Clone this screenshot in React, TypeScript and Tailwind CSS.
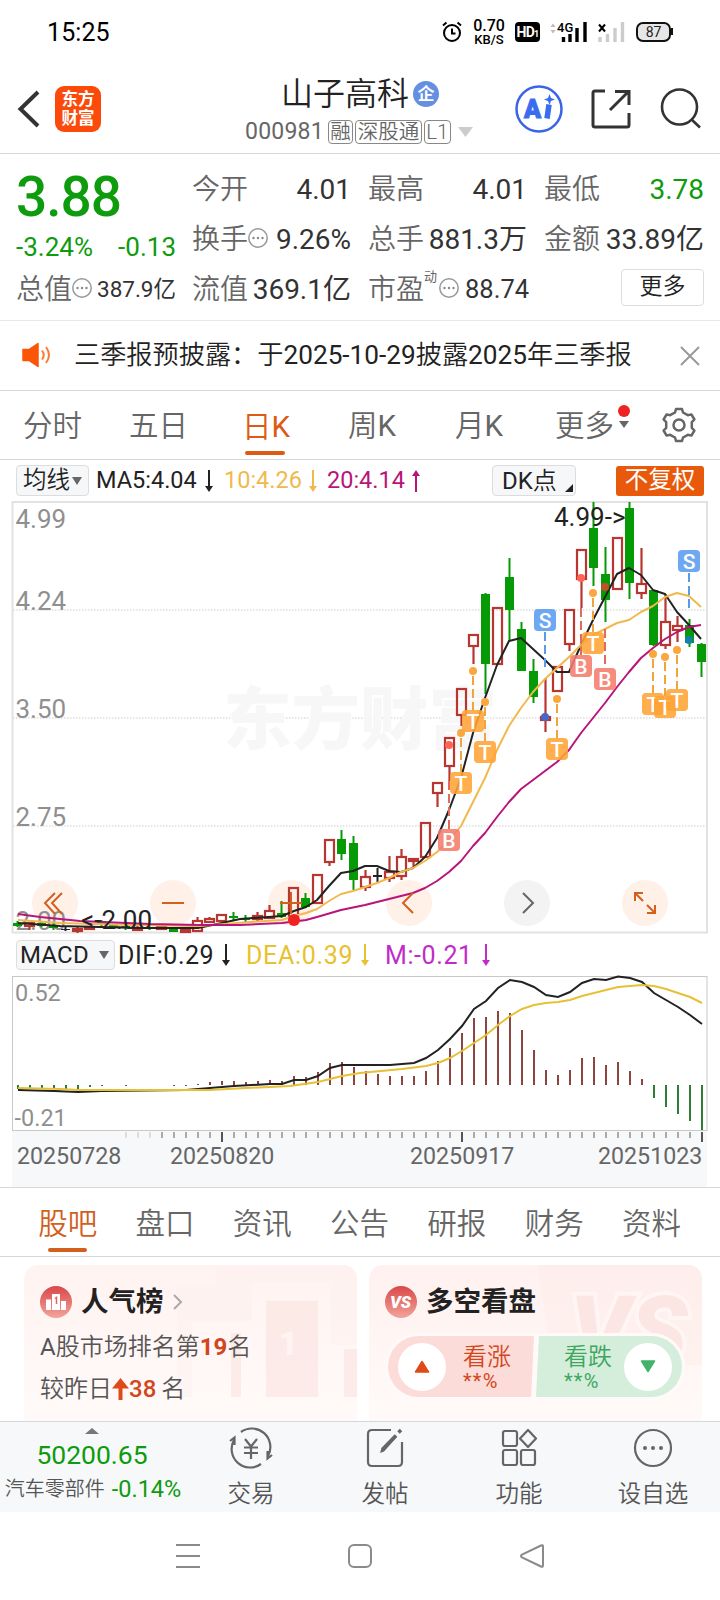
import type { ReactNode } from "react";

type Candle = [kind: "r" | "g" | "k", high: number, top: number, bottom: number, low: number];
type Point = [x: number, y: number];

const candles: Candle[] = [
    ["g", 921, 923, 926, 927],
    ["r", 923, 923, 926, 930],
    ["g", 921, 923, 926, 927],
    ["g", 923, 926, 928, 930],
    ["k", 926, 929, 930, 931],
    ["r", 927, 929, 931, 933],
    ["r", 926, 927, 929, 930],
    ["g", 920, 921, 924, 926],
    ["g", 924, 925, 927, 928],
    ["g", 925, 926, 928, 930],
    ["r", 926, 928, 930, 930],
    ["g", 926, 927, 929, 930],
    ["r", 926, 927, 929, 930],
    ["g", 928, 929, 932, 932],
    ["r", 929, 930, 932, 933],
    ["r", 917, 921, 931, 932],
    ["r", 917, 919, 922, 923],
    ["r", 914, 915, 921, 921],
    ["g", 912, 916, 918, 921],
    ["g", 915, 918, 920, 922],
    ["r", 912, 916, 919, 921],
    ["r", 905, 911, 918, 918],
    ["g", 901, 913, 917, 918],
    ["r", 887, 888, 917, 917],
    ["g", 893, 898, 907, 908],
    ["r", 874, 875, 903, 903],
    ["r", 839, 840, 862, 866],
    ["g", 830, 839, 854, 860],
    ["g", 836, 843, 880, 890],
    ["r", 870, 877, 887, 891],
    ["k", 868, 875, 877, 882],
    ["r", 856, 872, 878, 882],
    ["r", 849, 857, 876, 880],
    ["r", 858, 859, 861, 868],
    ["r", 822, 823, 857, 857],
    ["r", 782, 783, 793, 807],
    ["r", 737, 738, 766, 781],
    ["r", 688, 689, 715, 726],
    ["r", 634, 635, 646, 664],
    ["g", 593, 594, 664, 694],
    ["r", 607, 608, 664, 664],
    ["g", 558, 577, 610, 641],
    ["g", 622, 629, 671, 671],
    ["g", 659, 671, 697, 703],
    ["r", 678, 717, 720, 732],
    ["r", 666, 667, 691, 691],
    ["r", 609, 610, 644, 651],
    ["r", 549, 550, 579, 608],
    ["g", 502, 528, 568, 586],
    ["g", 547, 574, 600, 622],
    ["r", 537, 538, 589, 589],
    ["g", 502, 508, 583, 599],
    ["r", 548, 584, 593, 599],
    ["g", 590, 590, 645, 646],
    ["r", 594, 622, 645, 649],
    ["r", 616, 626, 630, 642],
    ["g", 619, 625, 643, 647],
    ["g", 643, 644, 662, 677],
];

const ma5: Point[] = [[18, 923], [60, 926], [100, 927], [140, 928], [198, 928], [222, 923], [240, 919], [282, 916], [294, 911], [306, 907], [317, 900], [329, 886], [341, 873], [353, 871], [365, 866], [377, 866], [389, 871], [401, 872], [413, 868], [425, 857], [437, 838], [449, 810], [461, 778], [473, 733], [485, 698], [497, 665], [509, 641], [521, 638], [533, 649], [545, 660], [557, 672], [569, 672], [581, 645], [593, 620], [605, 597], [617, 574], [629, 568], [641, 575], [653, 590], [665, 594], [677, 612], [689, 625], [701, 639]];
const ma10: Point[] = [[18, 920], [60, 923], [130, 925], [200, 926], [250, 922], [282, 920], [294, 916], [306, 913], [317, 909], [329, 901], [341, 894], [353, 891], [365, 887], [377, 883], [389, 878], [401, 872], [413, 868], [425, 861], [437, 852], [449, 841], [461, 826], [473, 802], [485, 778], [497, 750], [509, 726], [521, 708], [533, 692], [545, 679], [557, 668], [569, 657], [581, 645], [593, 635], [605, 629], [617, 623], [629, 620], [641, 612], [653, 606], [665, 597], [677, 593], [689, 596], [701, 607]];
const ma20: Point[] = [[18, 914], [40, 917], [60, 919], [80, 921], [150, 924], [200, 925], [240, 925], [282, 923], [306, 920], [317, 917], [341, 910], [365, 905], [389, 899], [413, 893], [425, 888], [437, 881], [449, 872], [461, 861], [473, 846], [485, 833], [497, 817], [509, 802], [521, 789], [533, 780], [545, 771], [557, 762], [569, 750], [581, 733], [593, 718], [605, 703], [617, 687], [629, 672], [641, 658], [653, 648], [665, 639], [677, 632], [689, 627], [701, 625]];
const dif: Point[] = [[18, 1090], [54, 1091], [78, 1092], [102, 1091], [186, 1090], [210, 1088], [234, 1086], [270, 1084], [282, 1084], [294, 1080], [306, 1080], [318, 1076], [330, 1068], [342, 1065], [390, 1065], [402, 1064], [414, 1063], [426, 1058], [438, 1050], [450, 1039], [462, 1026], [474, 1009], [486, 1001], [498, 988], [510, 980], [522, 982], [534, 987], [546, 995], [558, 997], [570, 992], [582, 983], [594, 979], [606, 980], [618, 976.5], [630, 978], [642, 982], [654, 993], [666, 1000], [678, 1007], [690, 1015], [702, 1024]];
const dea: Point[] = [[18, 1088], [60, 1089], [78, 1090], [210, 1090], [246, 1088], [290, 1086], [318, 1082], [342, 1076], [360, 1073], [402, 1069], [426, 1066], [438, 1063], [450, 1058], [462, 1051], [474, 1043], [486, 1035], [498, 1025], [510, 1016], [522, 1009], [534, 1005], [546, 1003], [558, 1002], [570, 1000], [582, 996], [618, 987], [642, 985], [654, 986], [666, 989], [690, 997], [702, 1003]];

const macdBars = [-4, -3, -3, -3, -4, -4, -2, -1, 0, -1, 0, 0, 0, -1, -1, 1, 3, 4, 4, 3, 4, 5, 4, 9, 8, 13, 22, 23, 18, 14, 11, 9, 9, 9, 14, 24, 37, 52, 67, 68, 74, 72, 55, 35, 15, 10, 15, 27, 28, 20, 23, 14, 6, -13, -22, -29, -36, -45];

// letter, x, box centre y, dot y, dash start, dash end
const markers: ["S" | "T" | "B", number, number, number, number, number][] = [
    ["B", 449, 840, 745, 781, 829],
    ["T", 461, 783, 733, 738, 772],
    ["T", 473, 721, 671, 676, 710],
    ["T", 485, 752, 702, 707, 741],
    ["S", 545, 620, 717, 632, 670],
    ["T", 557, 749, 699, 704, 738],
    ["B", 581, 666, 578, 608, 655],
    ["T", 593, 643, 593, 598, 632],
    ["B", 605, 679, 587, 629, 668],
    ["T", 653, 704, 654, 659, 693],
    ["T", 665, 707, 657, 662, 696],
    ["T", 677, 700, 650, 655, 689],
    ["S", 689, 561, 640, 573, 611],
];

const markerColor = { S: "#5a9cf0", T: "#ffa436", B: "#f57c6b" };
const dashColor = { S: "#5a9ae6", T: "#f0a53c", B: "#e06a5c" };

const toPoints = (line: Point[]) => line.map((p) => p.join(",")).join(" ");

function StatusBar() {
    return (
        <div className="flex h-[64px] items-center pl-[47px] text-black">
            <div className="w-[395px] pt-px text-[25px] tracking-[0.1px]">15:25</div>
            <svg width="20" height="22" viewBox="0 0 20 22" fill="none" stroke="#000" strokeWidth="2">
                <circle cx="10" cy="12" r="8" />
                <path d="M10 7.5V12.5H13.5M1 4.5L4.5 1.5M19 4.5L15.5 1.5" />
            </svg>
            <div className="ml-[11px] flex w-[32px] flex-col items-center font-medium">
                <span className="text-[16px] leading-[14px]">0.70</span>
                <span className="text-[13px] leading-[13px]">KB/S</span>
            </div>
            <div className="ml-[10px] flex h-[20px] w-[25px] items-baseline justify-center rounded-[4px] bg-black text-[14px] leading-[20px] font-bold tracking-tighter text-white">
                HD<span className="text-[9px]">1</span>
            </div>
            <svg className="ml-[9px]" width="124" height="24" viewBox="549 20 124 24">
                <path d="M550.5 27l2.5-3.5 2.5 3.5zM550.5 30l2.5 3.5 2.5-3.5z" fill="#bbb" />
                <text x="557" y="32" fontSize="13" fontWeight="500" fill="#000">4G</text>
                <path d="M563.5 37V42M570 34V42M577 28V42M585 22V42" stroke="#000" strokeWidth="3.4" />
                <path d="M599 24.500l6 7M605 24.500l-6 7" stroke="#000" strokeWidth="2" />
                <path d="M600 37V42M607.500 34V42M615 28V42M622.500 22V42" stroke="#ccc" strokeWidth="3.400" />
                <rect x="637" y="23" width="33" height="18" rx="6" fill="#e6e6e6" stroke="#111" strokeWidth="2" />
                <rect x="671" y="28" width="3" height="7" fill="#111" />
                <text x="653.5" y="37" fontSize="14" textAnchor="middle" fill="#222">87</text>
            </svg>
        </div>
    );
}

function Tag({ children }: { children: ReactNode }) {
    return (
        <span className="flex h-[24px] items-center rounded-[4px] border border-[#888] px-[1.500px] text-[20.500px] leading-none font-[350]">{children}</span>
    );
}

function Header() {
    return (
        <div className="flex h-[90px] border-b border-[#d8d8d8] pl-[16px]">
            <svg className="mt-[25px]" width="26" height="40" viewBox="0 0 26 40" fill="none" stroke="#333" strokeWidth="4">
                <path d="M22 3L4.500 20L22 37" />
            </svg>
            <div className="mt-[22px] ml-[13px] flex h-[46px] w-[46px] flex-col items-center justify-center rounded-[9px] bg-[#fb4a0a] text-[16.500px] leading-[19px] font-bold text-white">
                <span>东方</span>
                <span>财富</span>
            </div>
            <div className="ml-[144px] w-[243px] pt-[9px] text-[#222]">
                <div className="ml-[36px] flex items-center gap-[4px]">
                    <span className="text-[32px] leading-[42px] font-[350]">山子高科</span>
                    <span className="flex size-[26px] items-center justify-center rounded-full bg-[#658fe0] text-[17px] leading-none font-bold text-white">企</span>
                </div>
                <div className="flex items-center gap-[2px] text-[#666]">
                    <span className="mr-[2px] text-[23px] leading-[34px] tracking-[0.2px]">000981</span>
                    <Tag>融</Tag>
                    <Tag>深股通</Tag>
                    <Tag>L1</Tag>
                    <svg className="ml-[5px]" width="15" height="10" viewBox="0 0 15 10">
                        <path d="M0 0H15L7.500 10Z" fill="#ccc" />
                    </svg>
                </div>
            </div>
            <svg className="ml-[26px]" width="190" height="80" viewBox="514 64 190 80" fill="none">
                <circle cx="539" cy="109" r="22.500" stroke="#3b63e8" strokeWidth="2.500" />
                <text x="524" y="118" fontSize="25" fontWeight="900" fill="#3b6cf0" stroke="#3b6cf0">A</text>
                <path d="M549 104.500L547 118.500" stroke="#3b6cf0" strokeWidth="5.500" />
                <path d="M549.500 94l1.500 4 4 1.500-4 1.500-1.500 4-1.500-4-4-1.500 4-1.500z" fill="#3b6cf0" />
                <path d="M605 91H595Q593 91 593 93V125Q593 127 595 127H627Q629 127 629 125V113" stroke="#333" strokeWidth="3" />
                <path d="M610 110L628 92M615 91.500H629V105" stroke="#333" strokeWidth="3" />
                <circle cx="679.500" cy="107" r="17.500" stroke="#333" strokeWidth="2.600" />
                <path d="M691 119L700 127.500" stroke="#333" strokeWidth="2.600" />
            </svg>
        </div>
    );
}

function Dots() {
    return (
        <svg width="20" height="20" viewBox="0 0 20 20" className="-mt-[4px] shrink-0">
            <circle cx="10" cy="10" r="9.200" fill="none" stroke="#999" strokeWidth="1.500" />
            <circle cx="5.500" cy="10" r="1.200" fill="#888" />
            <circle cx="10" cy="10" r="1.200" fill="#888" />
            <circle cx="14.500" cy="10" r="1.200" fill="#888" />
        </svg>
    );
}

function Quote({ label, value, dots, green }: { label: string; value: string; dots?: boolean; green?: boolean }) {
    return (
        <div className="flex h-[50px] items-center text-[28px] leading-none whitespace-nowrap">
            <span className="font-[350] text-[#666]">{label}</span>
            {dots && <Dots />}
            <span className={green ? "ml-auto text-[#0e9b0e]" : "ml-auto text-[#333]"}>{value}</span>
        </div>
    );
}

function Quotes() {
    return (
        <div className="flex h-[167px] border-b border-[#e8e8e8] pt-[10.500px] pl-[16px]">
            <div className="w-[160px] text-[#0e9b0e]">
                <div className="flex h-[66px] items-center text-[55px] font-medium tracking-[-1px]">3.88</div>
                <div className="flex h-[34px] items-center justify-between text-[26px]">
                    <span>-3.24%</span>
                    <span>-0.13</span>
                </div>
                <div className="flex h-[50px] items-center text-[28px] leading-none whitespace-nowrap text-[#666]">
                    <span className="font-[350]">总值</span>
                    <Dots />
                    <span className="ml-auto text-[22.500px] text-[#333]">387.9亿</span>
                </div>
            </div>
            <div className="ml-[16px] w-[159px]">
                <Quote label="今开" value="4.01" />
                <Quote label="换手" value="9.26%" dots />
                <Quote label="流值" value="369.1亿" />
            </div>
            <div className="ml-[17px] w-[159px]">
                <Quote label="最高" value="4.01" />
                <Quote label="总手" value="881.3万" />
                <div className="flex h-[50px] items-center text-[28px] leading-none whitespace-nowrap text-[#666]">
                    <span className="font-[350]">市盈</span>
                    <span className="-mt-[26px] text-[13px]">动</span>
                    <span className="ml-[2px] flex"><Dots /></span>
                    <span className="ml-[6px] text-[25.500px] text-[#333]">88.74</span>
                </div>
            </div>
            <div className="ml-[17px] w-[160px]">
                <Quote label="最低" value="3.78" green />
                <Quote label="金额" value="33.89亿" />
                <div className="mt-[4px] ml-auto flex h-[37px] w-[83px] items-center justify-center rounded-[4px] border border-[#ddd] text-[23px] font-[350] text-[#222]">更多</div>
            </div>
        </div>
    );
}

function Notice() {
    return (
        <div className="flex h-[70px] items-center border-b border-[#d8d8d8] pl-[22px]">
            <svg width="31" height="26" viewBox="0 0 31 26" className="-mt-px">
                <path d="M1 7.500H7L16 1.500V24.500L7 18.500H1Z" fill="#fb5607" stroke="#fb5607" strokeWidth="1.500" strokeLinejoin="round" />
                <path d="M20 8.500Q23.500 13 20 17.500M24 5Q30 13 24 21" fill="none" stroke="#fb7a35" strokeWidth="2" />
            </svg>
            <div className="ml-[21px] w-[606px] text-[26.200px] font-[350] whitespace-nowrap text-[#222]">
                三季报预披露：于<span className="font-normal">2025-10-29</span>披露<span className="font-normal">2025</span>年三季报
            </div>
            <svg width="20" height="20" viewBox="0 0 20 20" stroke="#999" strokeWidth="2">
                <path d="M1 1L19 19M19 1L1 19" />
            </svg>
        </div>
    );
}

function PeriodTabs() {
    return (
        <div className="flex h-[69px] items-center border-b border-[#d8d8d8] pl-[23px] text-[29.500px] leading-none text-[#666]">
            <div className="w-[106px] pt-[3px] font-[350]">分时</div>
            <div className="w-[113px] pt-[3px] font-[350]">五日</div>
            <div className="flex h-full w-[106px] flex-col pt-[22px] text-[#dd5a14]">
                <div><span className="font-[350]">日</span>K</div>
                <div className="mt-[8px] ml-[3px] h-[4px] w-[40px] rounded-full bg-[#dd5a14]" />
            </div>
            <div className="w-[107px] pt-[3px]"><span className="font-[350]">周</span>K</div>
            <div className="w-[100px] pt-[3px]"><span className="font-[350]">月</span>K</div>
            <div className="pt-[3px] font-[350]">更多</div>
            <div className="ml-[3px] flex w-[13px] flex-col items-center gap-[4px] pb-[17px]">
                <div className="size-[12px] rounded-full bg-[#ee2222]" />
                <svg width="10" height="7" viewBox="0 0 10 7"><path d="M0 0H10L5 7Z" fill="#666" /></svg>
            </div>
            <svg className="ml-[31px]" width="36" height="36" viewBox="-18 -18 36 36" fill="none" stroke="#666" strokeWidth="2.500" strokeLinejoin="round">
                <path d="M-4 -12.500L-3 -16H3L4 -12.500L8.800 -9.800L12.400 -10.600L15.400 -5.500L12.800 -2.800V2.800L15.400 5.500L12.400 10.600L8.800 9.800L4 12.500L3 16H-3L-4 12.500L-8.800 9.800L-12.400 10.600L-15.400 5.500L-12.800 2.800V-2.800L-15.400 -5.500L-12.400 -10.600L-8.800 -9.800Z" />
                <circle r="5.500" />
            </svg>
        </div>
    );
}

function Arrow({ up }: { up?: boolean }) {
    return (
        <svg width="8" height="22" viewBox="0 0 8 22" className={up ? "rotate-180" : ""}>
            <path d="M4 0V20" stroke="currentColor" strokeWidth="2" />
            <path d="M0 16H8L4 22Z" fill="currentColor" />
        </svg>
    );
}

function MaRow() {
    return (
        <div className="flex h-[41px] items-center pl-[16px] text-[23.500px] leading-none whitespace-nowrap">
            <div className="flex h-[31px] w-[73px] items-center justify-center gap-[2px] rounded-[4px] border border-[#ddd] bg-[#f6f7f9] text-[23.500px] font-[350] text-[#222]">
                均线
                <svg width="10" height="8" viewBox="0 0 10 8"><path d="M0 0H10L5 8Z" fill="#666" /></svg>
            </div>
            <div className="ml-[7px] flex w-[128px] items-center gap-[8px] text-[#222]">MA5:4.04<Arrow /></div>
            <div className="flex w-[103px] items-center gap-[7px] text-[23.500px] text-[#f0b94e]">10:4.26<Arrow /></div>
            <div className="flex w-[165px] items-center gap-[7px] text-[23.500px] text-[#b8157b]">20:4.14<Arrow up /></div>
            <div className="flex h-[31px] w-[84px] items-center rounded-[4px] border border-[#ddd] bg-[#f6f7f9] pl-[9px] text-[24px] text-[#222]">
                DK<span className="font-[350]">点</span>
                <svg className="mt-[14px] ml-[8px]" width="8" height="8" viewBox="0 0 8 8"><path d="M8 0V8H0Z" fill="#222" /></svg>
            </div>
            <div className="ml-[40px] flex h-[30px] w-[88px] items-center justify-center rounded-[3px] bg-[#e8590c] text-[23.500px] text-white">不复权</div>
        </div>
    );
}

function CandleChart() {
    return (
        <svg width="720" height="434" viewBox="0 501 720 434" className="block">
            <rect x="12.500" y="502" width="694.500" height="430.500" fill="none" stroke="#e2e2e2" strokeWidth="2" />
            {[610, 718, 826].map((y) => (
                <path key={y} d={`M13 ${y}H706`} stroke="#ddd" strokeWidth="1.500" strokeDasharray="1.500 1.500" />
            ))}
            <text x="223" y="744" fontSize="68.500" fontWeight="900" fill="#f7f7f7">东方财富</text>
            {[55, 173, 291, 409, 527, 645].map((x) => (
                <circle key={x} cx={x} cy="903" r="23" fill={x === 527 ? "#f3f3f3" : "#fff0e8"} />
            ))}
            <g fontSize="26" fill="#8f8f8f">
                <text x="15.500" y="528">4.99</text>
                <text x="15.500" y="610">4.24</text>
                <text x="15.500" y="718">3.50</text>
                <text x="15.500" y="826">2.75</text>
                <text x="15.500" y="930">2.00</text>
            </g>

            {candles.map(([kind, high, top, bottom, low], i) => {
                const x = 17.5 + i * 12;
                if (kind === "r") {
                    return (
                        <g key={i} stroke="#b93530" strokeWidth="2.200" fill="none">
                            <path d={`M${x} ${high}V${top}M${x} ${bottom}V${low}`} />
                            <rect x={x - 4.5} y={top} width="9" height={bottom - top} />
                        </g>
                    );
                }
                const color = kind === "g" ? "#069a06" : "#222";
                return (
                    <g key={i} fill={color}>
                        <rect x={x - 1} y={high} width="2" height={low - high} />
                        <rect x={x - 4.5} y={top} width="9" height={bottom - top} />
                    </g>
                );
            })}

            <g fill="none" strokeWidth="2" strokeLinejoin="round">
                <polyline points={toPoints(ma5)} stroke="#222" />
                <polyline points={toPoints(ma10)} stroke="#f0b94e" />
                <polyline points={toPoints(ma20)} stroke="#b8157b" />
            </g>

            {markers.map(([letter, x, y, dot, from, to]) => (
                <g key={x}>
                    <path d={`M${x} ${from}V${to}`} stroke={dashColor[letter]} strokeWidth="2" strokeDasharray="9 4" />
                    <circle cx={x} cy={dot} r="4" fill={x === 689 ? "#1780a8" : x === 545 ? "#4169cf" : x === 605 ? "#c0502a" : letter === "B" ? "#ff6455" : "#f9a73e"} />
                    <rect x={x - 11} y={y - 11} width="22" height="22" rx="4" fill={markerColor[letter]} fillOpacity="0.88" />
                    <text x={x} y={y + 7.5} fontSize="21" fontWeight="500" textAnchor="middle" fill="#fff">{letter}</text>
                </g>
            ))}
            <circle cx="294" cy="920" r="6" fill="#f02222" />

            <g fontSize="26" fill="#222">
                <text x="81" y="928.500">&lt;-2.00</text>
                <text x="554" y="526">4.99-&gt;</text>
            </g>

            <g fill="none" stroke="#d4601e" strokeWidth="2">
                <path d="M55 893L45 903L55 914M62 893L52 903L62 914" />
                <path d="M162 903H184" />
                <path d="M280 903H302M291 892V914" />
                <path d="M413 893L403 903L413 913" />
                <path d="M523 893L533 903L523 913" stroke="#666" />
                <path d="M635 901V893H643M635 893L643 901M655 905V913H647M655 913L647 905" />
            </g>
        </svg>
    );
}

function MacdRow() {
    return (
        <div className="flex h-[40px] items-center pl-[16px] text-[25px] leading-none whitespace-nowrap">
            <div className="flex h-[30px] w-[99px] items-center justify-between rounded-[4px] border border-[#ddd] bg-[#f6f7f9] pr-[5px] pl-[3px] text-[24px] tracking-[0.2px] text-[#222]">
                MACD
                <svg width="10" height="8" viewBox="0 0 10 8"><path d="M0 0H10L5 8Z" fill="#666" /></svg>
            </div>
            <div className="ml-[3px] flex w-[128px] items-center gap-[8px] tracking-[0.55px] text-[#222]">DIF:0.29<Arrow /></div>
            <div className="flex w-[139px] items-center gap-[8px] tracking-[0.7px] text-[#e8c12e]">DEA:0.39<Arrow /></div>
            <div className="flex items-center gap-[9px] tracking-[0.6px] text-[#c02cc8]">M:-0.21<Arrow /></div>
        </div>
    );
}

function MacdChart() {
    return (
        <svg width="720" height="212" viewBox="0 975 720 212" className="block">
            <rect x="12" y="1131" width="695" height="56" fill="#f7f8fa" />
            <rect x="12.500" y="976.500" width="694.500" height="154" fill="#fff" stroke="#c8c8c8" />
            <g fontSize="23.500" fill="#8f8f8f">
                <text x="15" y="1001">0.52</text>
                <text x="14.500" y="1126">-0.21</text>
            </g>
            {macdBars.map((h, i) => (
                <rect key={i} x={17 + i * 12} y={h > 0 ? 1085 - h : 1085} width="2" height={Math.abs(h)} fill={h > 0 ? "#8c4540" : "#2f7d32"} />
            ))}
            <polyline points={toPoints(dif)} fill="none" stroke="#222" strokeWidth="2" />
            <polyline points={toPoints(dea)} fill="none" stroke="#e6c035" strokeWidth="2" />
            {macdBars.map((_, i) => {
                if (i < 9) return null;
                const major = i === 17 || i === 37 || i === 57;
                return <rect key={i} x={17 + i * 12} y="1132" width="2" height={major ? 10 : 6} fill={major ? "#555" : i < 12 ? "#ddd" : "#aaa"} />;
            })}
            <g fontSize="23.200" fill="#666">
                <text x="17" y="1164">20250728</text>
                <text x="170" y="1164">20250820</text>
                <text x="410" y="1164">20250917</text>
                <text x="598" y="1164">20251023</text>
            </g>
        </svg>
    );
}

function InfoTabs() {
    return (
        <div className="flex h-[70px] border-y border-[#d8d8d8] pt-[22px] pl-[19px] text-[29.500px] leading-none text-[#666]">
            <div className="flex w-[97.300px] flex-col items-center font-[350] text-[#d2601c]">
                股吧
                <div className="mt-[8px] h-[4px] w-[39px] rounded-full bg-[#d2601c]" />
            </div>
            {["盘口", "资讯", "公告", "研报", "财务", "资料"].map((t) => (
                <div key={t} className="w-[97.300px] text-center font-[350]">{t}</div>
            ))}
        </div>
    );
}

function Cards() {
    return (
        <div className="flex h-[164px] gap-[12px] overflow-hidden pt-[8px] pl-[24px]">
            <div className="relative w-[333px] overflow-hidden rounded-t-[14px] bg-linear-to-b from-[#fff3f1] to-[#fffaf9] pt-[18px] pl-[16px]">
                <svg className="absolute top-0 right-0" width="180" height="156" viewBox="0 0 180 156">
                    <path d="M40 0H180V80H154V17H75V56H15V132H0V20H40Z" fill="#fdeeec" opacity="0.35" />
                    <path d="M89 36H141V132H89ZM54 68H64V132H54ZM167 84H180V132H167Z" fill="#fbe4e1" opacity="0.65" />
                    <text x="102" y="90" fontSize="33" fontWeight="900" fill="#fff4f2">1</text>
                </svg>
                <div className="relative flex h-[38px] items-center text-[27.500px] font-bold text-[#222]">
                    <svg width="32" height="32" viewBox="0 0 32 32">
                        <defs>
                            <linearGradient id="badge" x2="0" y2="1"><stop stopColor="#d94848" /><stop offset="1" stopColor="#f2a49c" /></linearGradient>
                        </defs>
                        <circle cx="16" cy="16" r="16" fill="url(#badge)" />
                        <path d="M6 13.500h5V24H6zM12 8h8v16h-8zM21 15h5v9h-5z" fill="#fff" />
                        <path d="M15 12.500l1.500-1V18" stroke="#dd6660" strokeWidth="1.500" fill="none" />
                    </svg>
                    <span className="ml-[9px]">人气榜</span>
                    <svg className="ml-[9px]" width="10" height="16" viewBox="0 0 10 16" fill="none" stroke="#aaa" strokeWidth="2"><path d="M1 1L8 8L1 15" /></svg>
                </div>
                <div className="relative mt-[5px] flex h-[42px] items-center text-[24px] text-[#555]">
                    A<span className="font-[350]">股市场排名第</span><span className="font-bold text-[#d2461e]">19</span><span className="font-[350]">名</span>
                </div>
                <div className="relative flex h-[42px] items-center text-[24px] text-[#555]">
                    <span className="font-[350]">较昨日</span>
                    <svg width="17" height="22" viewBox="0 0 17 22" fill="#e04a18"><path d="M8.500 0L17 10.500H10.500V22H6.500V10.500H0Z" /></svg>
                    <span className="font-medium text-[#d2461e]">38</span>
                    <span className="ml-[5px] font-[350]">名</span>
                </div>
            </div>
            <div className="relative w-[333px] overflow-hidden rounded-t-[14px] bg-linear-to-b from-[#fff1ef] to-[#fffaf9] pt-[18px] pl-[16px]">
                <svg className="absolute top-0 right-0" width="170" height="156" viewBox="0 0 170 156">
                    <path d="M6 0H170V100H20Z" fill="#fdebe8" opacity="0.5" />
                    <text x="38" y="98" fontSize="94" fontWeight="900" fontStyle="italic" fill="#fbe6e3" stroke="#fff5f3" strokeWidth="8" paintOrder="stroke">VS</text>
                </svg>
                <div className="relative flex h-[38px] items-center text-[27.500px] font-bold text-[#222]">
                    <svg width="32" height="32" viewBox="0 0 32 32">
                        <circle cx="16" cy="16" r="16" fill="url(#badge)" />
                        <text x="15.500" y="22" fontSize="17" fontWeight="900" fontStyle="italic" textAnchor="middle" fill="#fff">VS</text>
                    </svg>
                    <span className="ml-[9px]">多空看盘</span>
                </div>
                <div className="relative mt-[12px] flex h-[67px] w-[300px] rounded-full border-[3px] border-[#fffaf9] bg-[#fffaf9]">
                    <div className="flex h-full w-[146px] items-center rounded-l-full bg-[#fcdcd8] pl-[10px] text-[#d2461e] [clip-path:polygon(0_0,100%_0,98%_100%,0_100%)]">
                        <div className="flex size-[48px] items-center justify-center rounded-full bg-white">
                            <svg width="16" height="13" viewBox="0 0 16 13" fill="#e04a18"><path d="M8 1.500L14.500 12H1.500Z" stroke="#e04a18" strokeWidth="1.500" strokeLinejoin="round" /></svg>
                        </div>
                        <div className="ml-[17px] text-[24px] leading-[28px] font-[350]">看涨<div className="text-[20px] leading-[20px] font-normal tracking-[1.200px]">**%</div></div>
                    </div>
                    <div className="ml-[2px] flex h-full w-[146px] items-center rounded-r-full bg-[#d5eedc] pl-[28px] text-[#3fa660] [clip-path:polygon(2%_0,100%_0,100%_100%,0_100%)]">
                        <div className="text-[24px] leading-[28px] font-[350]">看跌<div className="text-[20px] leading-[20px] font-normal tracking-[1.200px]">**%</div></div>
                        <div className="ml-[12px] flex size-[48px] items-center justify-center rounded-full bg-white">
                            <svg width="16" height="13" viewBox="0 0 16 13" fill="#42b36a"><path d="M8 11.500L14.500 1H1.500Z" stroke="#42b36a" strokeWidth="1.500" strokeLinejoin="round" /></svg>
                        </div>
                    </div>
                </div>
            </div>
        </div>
    );
}

function Action({ label, children }: { label: string; children: ReactNode }) {
    return (
        <div className="flex w-[134px] flex-col items-center text-[23.500px] text-[#555]">
            <svg width="44" height="44" viewBox="-22 -22 44 44" fill="none" stroke="#666" strokeWidth="2.200">{children}</svg>
            <span className="mt-[7px] leading-[34px] font-[350]">{label}</span>
        </div>
    );
}

function BottomBar() {
    return (
        <div className="flex h-[91px] border-t border-[#d3d7dc] bg-[#f6f8fa] pt-[4px]">
            <div className="flex w-[184px] flex-col items-center pl-[2px] whitespace-nowrap text-[#0e9b0e]">
                <svg className="mt-[2px] mr-[2px]" width="14" height="6" viewBox="0 0 14 6"><path d="M0 6L7 0L14 6Z" fill="#777" /></svg>
                <div className="mt-[4px] mr-[2px] text-[26.500px] leading-[34px]">50200.65</div>
                <div className="flex items-center text-[23.500px] leading-[34px]">
                    <span className="mr-[7px] text-[20px] font-[350] text-[#555]">汽车零部件</span>-0.14%
                </div>
            </div>
            <Action label="交易">
                <path d="M-10 -16A18.500 18.500 0 0 1 17 8M10 16A18.500 18.500 0 0 1 -17 -8M-21 -7L-16.500 -10.500V-3M21 7L16.500 10.500V3" />
                <path d="M-6 -9L0 -1.500L6 -9M0 -1.500V11M-7 -0.500H7M-7 5H7" />
            </Action>
            <Action label="发帖">
                <path d="M6 -18H-13Q-17 -18 -17 -14V14Q-17 18 -13 18H13Q17 18 17 14V-6" />
                <path d="M-5 5L-3.500 0L9.500 -13L12 -11L-1 3.500Z" fill="#666" stroke="none" />
                <path d="M-2.500 1.500L11 -12.500M13.500 -15.500L16 -18" strokeWidth="3.500" />
            </Action>
            <Action label="功能">
                <rect x="-16" y="-17" width="14" height="15" rx="2" />
                <rect x="-16" y="2" width="14" height="15" rx="2" />
                <rect x="2" y="2" width="14" height="15" rx="2" />
                <path d="M9 -18L17 -9.500L9 -1L1 -9.500Z" strokeLinejoin="round" />
            </Action>
            <Action label="设自选">
                <circle r="18" />
                <g fill="#666" stroke="none"><circle cx="-8" r="2" /><circle r="2" /><circle cx="8" r="2" /></g>
            </Action>
        </div>
    );
}

function NavBar() {
    return (
        <div className="flex h-[87px] items-center bg-white pl-[175px]">
            <svg width="372" height="28" viewBox="175 1542 372 28" fill="none" stroke="#8a8a8a" strokeWidth="2">
                <path d="M176 1545H200M176 1556H200M176 1567H200" />
                <rect x="349" y="1545" width="22" height="22" rx="5" />
                <path d="M543 1546.500V1565.500Q543 1567.500 541 1566.500L522 1557.500Q520 1556 522 1554.500L541 1545.500Q543 1544.500 543 1546.500Z" />
            </svg>
        </div>
    );
}

export default function App() {
    return (
        <div className="h-[1600px] w-[720px] overflow-hidden bg-white font-[Roboto,'Noto_Sans_CJK_SC',sans-serif]">
            <StatusBar />
            <Header />
            <Quotes />
            <Notice />
            <PeriodTabs />
            <MaRow />
            <CandleChart />
            <MacdRow />
            <MacdChart />
            <InfoTabs />
            <Cards />
            <BottomBar />
            <NavBar />
        </div>
    );
}
